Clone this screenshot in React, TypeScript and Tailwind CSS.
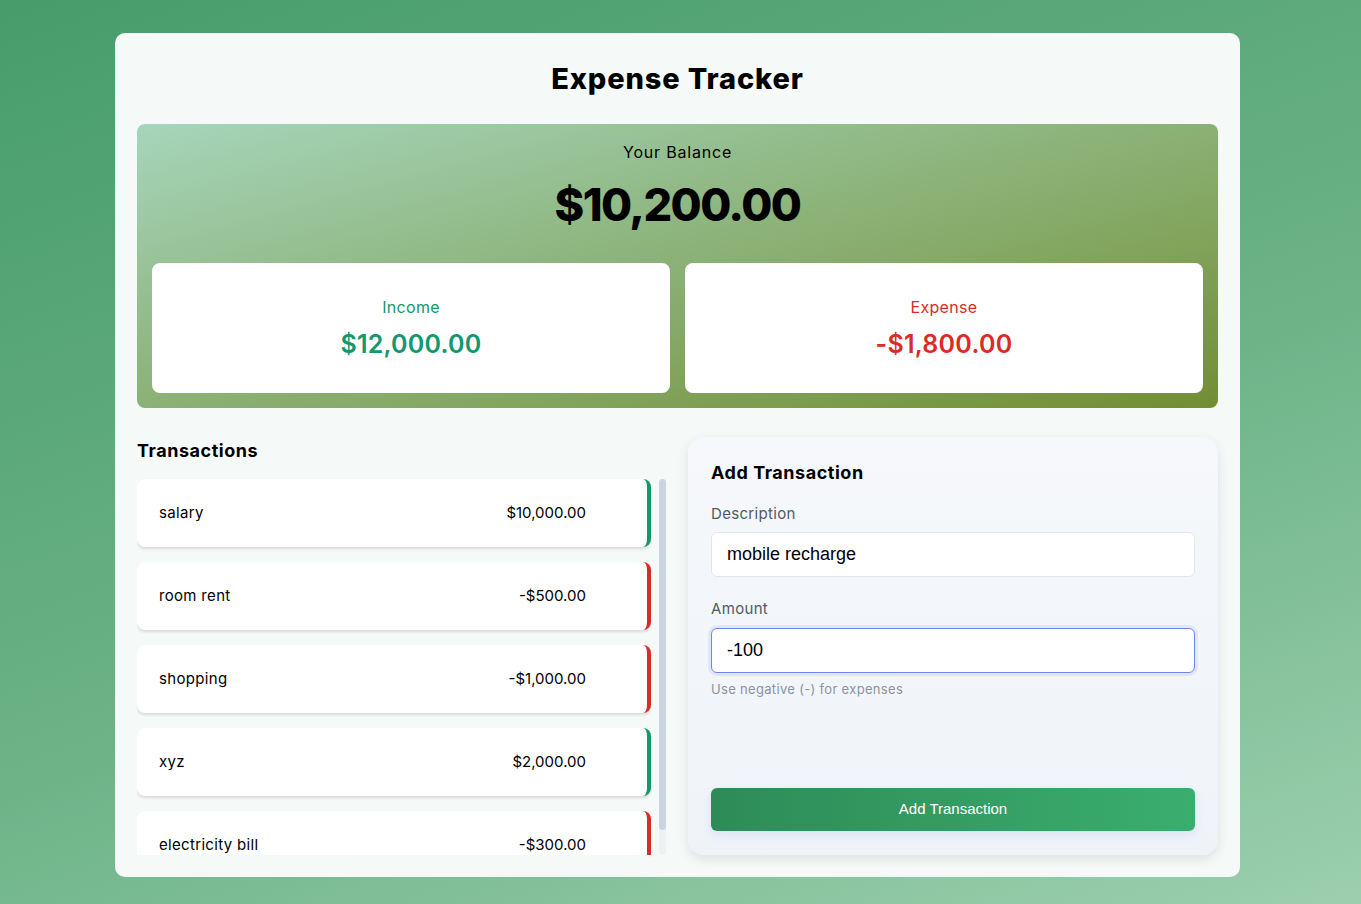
import { useState } from "react";

type Tx = { id: number; text: string; amount: number };

const initial: Tx[] = [
  { id: 1, text: "salary", amount: 10000 },
  { id: 2, text: "room rent", amount: -500 },
  { id: 3, text: "shopping", amount: -1000 },
  { id: 4, text: "xyz", amount: 2000 },
  { id: 5, text: "electricity bill", amount: -300 },
];

const money = (n: number) =>
  (n < 0 ? "-" : "") +
  "$" +
  Math.abs(n).toLocaleString("en-US", { minimumFractionDigits: 2, maximumFractionDigits: 2 });

export default function App() {
  const [txs] = useState<Tx[]>(initial);
  const [desc, setDesc] = useState("mobile recharge");
  const [amount, setAmount] = useState("-100");

  const income = txs.filter((t) => t.amount > 0).reduce((a, t) => a + t.amount, 0);
  const expense = txs.filter((t) => t.amount < 0).reduce((a, t) => a + t.amount, 0);
  const balance = income + expense;

  return (
    <main className="min-h-screen w-full bg-[linear-gradient(160deg,#479c6c_0%,#6bb287_55%,#9ccfae_100%)] pl-[115px] pt-[33px] pb-[27px] font-['Inter',sans-serif] tracking-[0.02em] text-black">
      <div className="w-[1125px] rounded-[10px] bg-[#f5f9f8] px-[22px] pt-[25px] pb-[22px]">
        {/* Header */}
        <h1 className="text-center text-[29px] font-extrabold leading-[42px] tracking-[0.03em]">Expense Tracker</h1>

        {/* Balance */}
        <section className="mt-[24px] rounded-lg bg-[linear-gradient(165deg,#a6d5bb_0%,#8db47c_45%,#728e33_100%)] p-[15px]">
          <p className="mt-[1px] text-center text-[16px] leading-[24px] tracking-[0.05em]">Your Balance</p>
          <p className="mt-[10px] text-center text-[45px] font-extrabold leading-[62px] tracking-[-0.035em]">{money(balance)}</p>
          <div className="mt-[27px] grid grid-cols-2 gap-[15px]">
            <div className="flex h-[130px] flex-col items-center justify-center rounded-lg bg-white">
              <p className="text-[16px] leading-[24px] text-[#13976c]">Income</p>
              <p className="mt-[8px] text-[25px] font-semibold leading-[34px] tracking-[0.01em] text-[#13976c]">{money(income)}</p>
            </div>
            <div className="flex h-[130px] flex-col items-center justify-center rounded-lg bg-white">
              <p className="text-[16px] leading-[24px] text-[#dc2b24]">Expense</p>
              <p className="mt-[8px] text-[25px] font-semibold leading-[34px] tracking-[0.01em] text-[#dc2b24]">{money(expense)}</p>
            </div>
          </div>
        </section>

        <div className="mt-[29px] grid grid-cols-[530px_1fr] gap-[21px]">
          {/* Transactions */}
          <div className="flex flex-col">
            <h2 className="text-[18px] font-bold leading-[28px] tracking-[0.03em]">Transactions</h2>
            <div className="mt-[14px] flex h-[376px] gap-[8px]">
              <ul className="flex w-[514px] flex-col gap-[15px] overflow-hidden">
                {txs.map((t) => (
                  <li
                    key={t.id}
                    className={
                      "flex h-[68px] shrink-0 items-center justify-between rounded-lg border-r-4 bg-white pl-[22px] pr-[61px] text-[15px] shadow-[0_2px_3px_rgba(0,0,0,0.12)] " +
                      (t.amount < 0 ? "border-[#dc2b24]" : "border-[#13976c]")
                    }
                  >
                    <span>{t.text}</span>
                    <span className="tracking-[0px]">{money(t.amount)}</span>
                  </li>
                ))}
              </ul>
              {/* scrollbar */}
              <div className="w-[7px] rounded-full bg-[#eef2f3]">
                <div className="h-[351px] w-full rounded-full bg-[#cbd5e1]" />
              </div>
            </div>
          </div>

          {/* Add form */}
          <div className="flex h-[418px] flex-col rounded-2xl bg-[linear-gradient(180deg,#f6f8fb,#eff3f8)] px-[23px] pt-[22px] pb-[24px] shadow-[0_4px_12px_rgba(0,0,0,0.10)]">
            <h3 className="text-[18px] font-bold leading-[28px] tracking-[0.03em]">Add Transaction</h3>
            <label className="mt-[16px] text-[15px] leading-[22px] text-[#505a66]">Description</label>
            <input
              value={desc}
              onChange={(e) => setDesc(e.target.value)}
              className="mt-[7px] h-[45px] w-full rounded-md border border-[#e1e6ee] bg-white px-[15px] font-['Liberation_Sans',Arial,sans-serif] text-[18px] tracking-normal outline-none"
            />
            <label className="mt-[21px] text-[15px] leading-[22px] text-[#505a66]">Amount</label>
            <input
              autoFocus
              value={amount}
              onChange={(e) => setAmount(e.target.value)}
              className="mt-[8px] h-[45px] w-full rounded-md border border-[#6d85ee] bg-white px-[15px] font-['Liberation_Sans',Arial,sans-serif] text-[18px] tracking-normal shadow-[0_0_0_3px_rgba(109,133,238,0.12)] outline-none"
            />
            <p className="mt-[7px] text-[13px] leading-[18px] text-[#8a93a5]">Use negative (-) for expenses</p>
            <button className="mt-auto h-[43px] w-full rounded-md bg-[linear-gradient(90deg,#2e8b57,#3aae6e)] font-['Liberation_Sans',Arial,sans-serif] text-[15px] tracking-normal text-white shadow-[0_4px_10px_rgba(100,130,230,0.15)]">
              Add Transaction
            </button>
          </div>
        </div>
      </div>
    </main>
  );
}
